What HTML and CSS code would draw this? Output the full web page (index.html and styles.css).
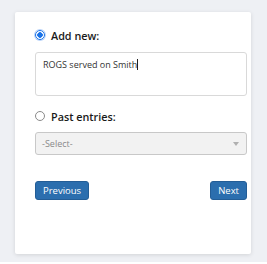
FILE: index.html
```html
<!DOCTYPE html>
<html>
<head>
<meta charset="utf-8">
<link rel="stylesheet" href="styles.css">
</head>
<body>
<div class="page">
  <div class="card">
    <label class="option">
      <span class="radio checked"></span>
      <span class="label">Add new:</span>
    </label>
    <div class="textarea">ROGS served on Smith<span class="caret"></span></div>
    <label class="option past">
      <span class="radio"></span>
      <span class="label">Past entries:</span>
    </label>
    <div class="select">
      <span>-Select-</span>
      <span class="arrow"></span>
    </div>
    <div class="buttons">
      <button class="btn">Previous</button>
      <button class="btn">Next</button>
    </div>
  </div>
</div>
</body>
</html>
```
FILE: styles.css
```css
html, body {
  margin: 0;
  padding: 0;
  background: #fff;
}
.page {
  background: #eef0f4;
  height: 262px;
  padding: 12px 16px 0 15px;
  box-sizing: border-box;
}
.card {
  background: #fff;
  height: 242px;
  border-radius: 2px;
  box-shadow: 0 1px 4px rgba(0,0,0,0.12);
  padding: 15px 4px 0 20px;
  box-sizing: border-box;
  font-family: "Open Sans", sans-serif;
}
.option {
  display: flex;
  align-items: center;
  height: 16px;
}
.radio {
  width: 10px;
  height: 10px;
  border-radius: 50%;
  border: 1px solid #8a8a8a;
  box-sizing: border-box;
  margin-right: 6px;
  background: #fff;
  flex: none;
}
.radio.checked {
  border: 1.5px solid #1a73e8;
  background: radial-gradient(circle, #1a73e8 0 2.5px, #fff 3px);
  box-shadow: 0 0 0 1px #bcd5fa;
}
.label {
  font-size: 10.8px;
  font-weight: 600;
  color: #1a1a1a;
}
.textarea {
  margin-top: 9px;
  height: 44px;
  border: 1px solid #d9d9d9;
  border-radius: 3px;
  box-sizing: border-box;
  padding: 5px 7px;
  font-size: 9px;
  color: #333;
  line-height: 13px;
}
.caret {
  display: inline-block;
  width: 1px;
  height: 11px;
  background: #222;
  vertical-align: -2px;
}
.past {
  margin-top: 12px;
}
.select {
  margin-top: 8px;
  height: 23px;
  border: 1px solid #c8c8c8;
  border-radius: 3px;
  background: #f2f2f2;
  box-sizing: border-box;
  display: flex;
  align-items: center;
  justify-content: space-between;
  padding: 0 7px 0 6px;
  font-size: 9px;
  color: #8a8a8a;
}
.arrow {
  width: 0;
  height: 0;
  border-left: 3.5px solid transparent;
  border-right: 3.5px solid transparent;
  border-top: 4px solid #b0b0b0;
}
.buttons {
  display: flex;
  justify-content: space-between;
  margin-top: 26px;
}
.btn {
  height: 19px;
  background: #2b6eae;
  color: #fff;
  border: 1px solid #235d96;
  border-radius: 3px;
  font-family: "Open Sans", sans-serif;
  font-size: 9.5px;
  padding: 0 7px;
  line-height: 17px;
}
```
